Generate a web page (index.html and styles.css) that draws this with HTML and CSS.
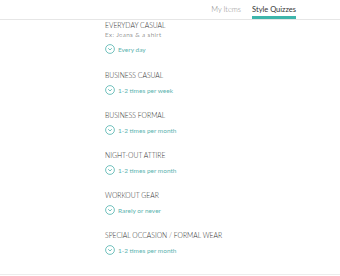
FILE: index.html
```html
<!DOCTYPE html>
<html lang="en">
<head>
    <meta charset="UTF-8">
    <title>Style Quizzes</title>
    <link rel="stylesheet" href="styles.css">
</head>
<body>

    <!-- Tabs -->
    <div class="tabs">
        <div class="tab">My Items</div>
        <div class="tab active">Style Quizzes</div>
    </div>

    <div class="quiz-list">
        <div class="quiz first">
            <div class="quiz-label">EVERYDAY CASUAL</div>
            <div class="quiz-hint">Ex: Jeans &amp; a shirt</div>
            <div class="quiz-answer">
                <svg class="chev" viewBox="0 0 10 10"><circle cx="5" cy="5" r="4.4"/><path d="M3.2 4.2 L5 6 L6.8 4.2"/></svg>
                Every day
            </div>
        </div>
        <div class="quiz">
            <div class="quiz-label">BUSINESS CASUAL</div>
            <div class="quiz-answer">
                <svg class="chev" viewBox="0 0 10 10"><circle cx="5" cy="5" r="4.4"/><path d="M3.2 4.2 L5 6 L6.8 4.2"/></svg>
                1-2 times per week
            </div>
        </div>
        <div class="quiz">
            <div class="quiz-label">BUSINESS FORMAL</div>
            <div class="quiz-answer">
                <svg class="chev" viewBox="0 0 10 10"><circle cx="5" cy="5" r="4.4"/><path d="M3.2 4.2 L5 6 L6.8 4.2"/></svg>
                1-2 times per month
            </div>
        </div>
        <div class="quiz">
            <div class="quiz-label">NIGHT-OUT ATTIRE</div>
            <div class="quiz-answer">
                <svg class="chev" viewBox="0 0 10 10"><circle cx="5" cy="5" r="4.4"/><path d="M3.2 4.2 L5 6 L6.8 4.2"/></svg>
                1-2 times per month
            </div>
        </div>
        <div class="quiz">
            <div class="quiz-label">WORKOUT GEAR</div>
            <div class="quiz-answer">
                <svg class="chev" viewBox="0 0 10 10"><circle cx="5" cy="5" r="4.4"/><path d="M3.2 4.2 L5 6 L6.8 4.2"/></svg>
                Rarely or never
            </div>
        </div>
        <div class="quiz last">
            <div class="quiz-label">SPECIAL OCCASION / FORMAL WEAR</div>
            <div class="quiz-answer">
                <svg class="chev" viewBox="0 0 10 10"><circle cx="5" cy="5" r="4.4"/><path d="M3.2 4.2 L5 6 L6.8 4.2"/></svg>
                1-2 times per month
            </div>
        </div>
    </div>

</body>
</html>
```

FILE: styles.css
```css
/* General Styling */
body {
    margin: 0;
    font-family: Lato, 'Open Sans', sans-serif;
    font-weight: 300;
    background: #ffffff;
    color: #555;
    overflow: hidden;
}

/* Tabs */
.tabs {
    display: flex;
    justify-content: flex-end;
    gap: 11px;
    padding-right: 44px;
    height: 19px;
    border-bottom: 1px solid #e6e6e6;
}

.tab {
    font-size: 7.5px;
    color: #8a8a8a;
    padding-top: 5px;
    box-sizing: border-box;
    height: 19px;
}

.tab.active {
    color: #333;
    font-weight: 400;
    border-bottom: 3px solid #3eb5ab;
}

/* Quiz List */
.quiz-list {
    padding-left: 105px;
    padding-top: 1px;
    border-bottom: 1px solid #ececec;
}

.quiz {
    height: 40px;
}

.quiz.first {
    height: 50px;
}

.quiz.last {
    height: 43px;
}

.quiz-label {
    font-size: 6.8px;
    color: #333;
    line-height: 9px;
}

.quiz-hint {
    font-size: 6.4px;
    letter-spacing: 0.35px;
    color: #444;
    line-height: 9px;
}

.quiz-answer {
    display: flex;
    align-items: center;
    gap: 3px;
    margin-top: 5px;
    font-size: 6.5px;
    font-weight: 400;
    color: #5cb3af;
}

.chev {
    width: 10px;
    height: 10px;
    fill: none;
    stroke: #4fb3ad;
    stroke-width: 0.8;
}
```
